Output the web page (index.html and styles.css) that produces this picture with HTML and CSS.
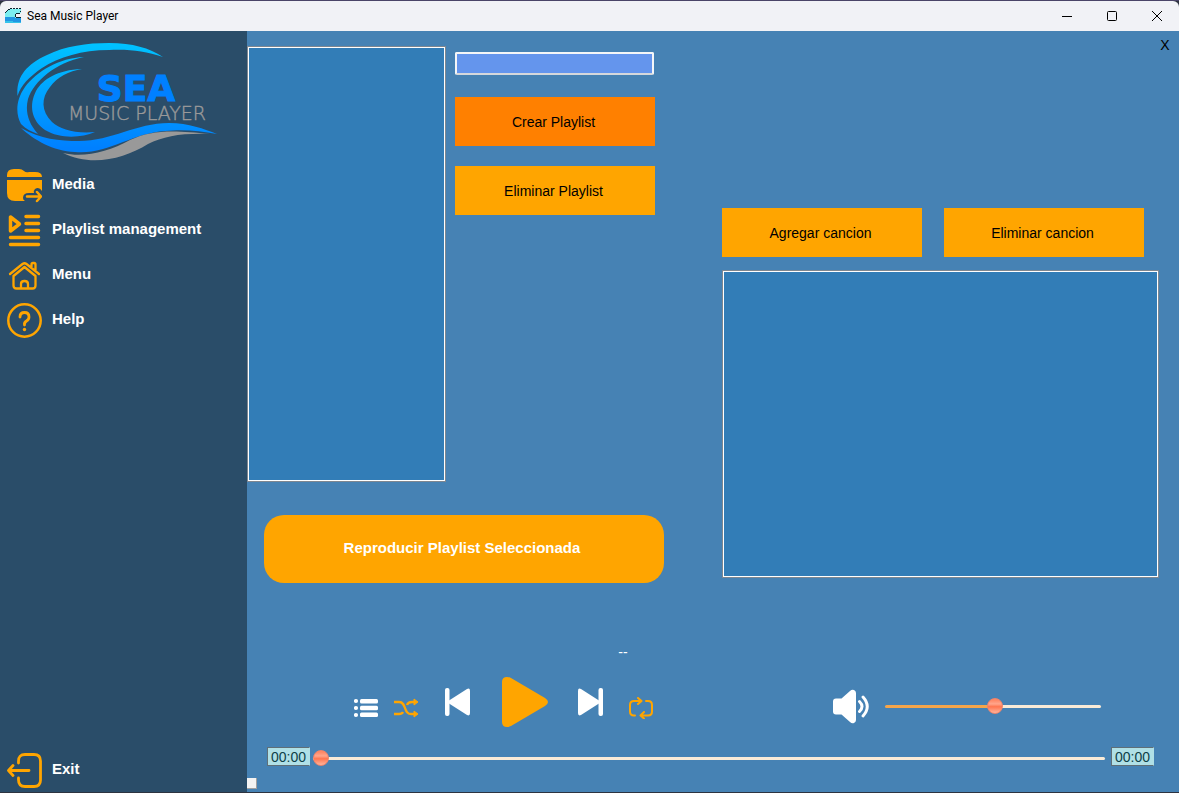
FILE: index.html
```html
<!DOCTYPE html>
<html lang="es">
<head>
<meta charset="utf-8">
<title>Sea Music Player</title>
<link rel="stylesheet" href="styles.css">
</head>
<body>
<div class="window">
  <header class="titlebar">
    <svg class="app-icon" viewBox="0 0 16 16" aria-hidden="true">
      <path fill="#7ceef0" d="M3 1h13v4h-5v1h-1v3h6v1H0V5h1V3h2z"/>
      <path fill="#2196e3" d="M0 9h10v1h6v5H0z"/>
      <path fill="#35c3ea" d="M0 13h8v1h8v1H0z"/>
      <path fill="#0b2430" d="M0 4h1v1H0zM1 3h1v1H1zM2 2h1v1H2zM3 1h2v1H3zM5 0h2v1H5zM8 0h2v1H8zM11 0h2v1h-2zM14 0h2v1h-2zM15 3h1v1h-1zM11 5h4v1h-4zM10 6h1v3h-1zM11 9h5v1h-5z"/>
    </svg>
    <span class="app-title">Sea Music Player</span>
    <div class="window-buttons">
      <button class="window-button" aria-label="Minimizar"><svg viewBox="0 0 12 12"><path d="M1 6.500h10"/></svg></button>
      <button class="window-button" aria-label="Maximizar"><svg viewBox="0 0 12 12"><rect x="1.500" y="1.500" width="9" height="9" rx="1"/></svg></button>
      <button class="window-button" aria-label="Cerrar"><svg viewBox="0 0 12 12"><path d="M1 1l10 10M11 1L1 11"/></svg></button>
    </div>
  </header>

  <div class="body">
    <aside class="sidebar">
      <svg class="logo" viewBox="0 0 200 118" role="img" aria-label="Sea Music Player">
        <defs>
          <linearGradient id="sea" gradientUnits="userSpaceOnUse" x1="0" y1="0" x2="0" y2="105">
            <stop offset="0" stop-color="#00c3ff"/><stop offset="1" stop-color="#0080ff"/>
          </linearGradient>
        </defs>
        <g fill="url(#sea)">
          <path d="M0.500 53C-1 35 8 22 30 12C48 3 70 0 92 0C116 0 132 5 146 14C128 8 112 6 92 7C65 7 42 14 25 25C12 34 4 42 0.500 53Z"/>
          <path d="M67 14C42 15 20 28 8 44C-2 58-1 72 4 81C9 86 15 89 21 91C11 80 8 68 11 56C17 38 38 20 67 14Z"/>
          <path d="M65 26C40 27 26 36 19 48C12 62 14 77 28 87C43 96 64 95 78 89C58 91 43 86 35 79C24 68 24 55 33 44C40 34 52 28 65 26Z"/>
          <path d="M4 85C24 96 42 98 62 98C95 98 119 80 152 80C172 80 187 86 200 91C182 88 168 86 148 88C115 90 90 112 58 109C36 108 17 97 4 85Z"/>
        </g>
        <path fill="#999" d="M46 110C67 115 91 109 113 97C135 87 155 87 193 91C166 90 147 93 131 101C107 116 74 124 46 110Z"/>
        <text class="logo-name" x="119" y="58">SEA</text>
        <text class="logo-subtitle" x="120" y="77">MUSIC PLAYER</text>
      </svg>

      <nav class="nav">
        <button class="nav-item">
          <svg class="nav-icon" viewBox="0 0 35 35"><path fill="#ffa500" d="M0 9V7Q0 1 7 1h5q3 0 5 2t5 1h6q7 0 7 5zM0 12h35v11q-3-5-7-2-2 2-1 4h-5q-6 0-6 5 0 2 2 3H8q-8 0-8-8z"/><path fill="none" stroke="#ffa500" stroke-width="2.500" stroke-linecap="round" stroke-linejoin="round" d="M20 28.500h13M30 24l4 4.500-4 4.500"/></svg>
          <span>Media</span>
        </button>
        <button class="nav-item">
          <svg class="nav-icon" viewBox="0 0 35 35"><g fill="none" stroke="#ffa500" stroke-width="3.500" stroke-linecap="round" stroke-linejoin="round"><path d="M19 3.500h12.500M19 10.500h12.500M19 17.500h12.500M3.500 24.500h28M3.500 31.500h28"/><path d="M3.500 4v14l9-7z"/></g></svg>
          <span>Playlist management</span>
        </button>
        <button class="nav-item">
          <svg class="nav-icon" viewBox="0 0 35 35"><g fill="none" stroke="#ffa500" stroke-width="2.300" stroke-linecap="round" stroke-linejoin="round"><path d="M3 16L15.500 6Q17.500 4.500 19.500 6L32 16M6.500 18v9.500q0 3 3 3h16q3 0 3-3V18M6.500 18L17.500 9 28.500 18M14 30.500V26q0-3 3.500-3t3.500 3v4.500M24.500 9V6.500q0-1.500 1.500-1.500h1q1.500 0 1.500 1.500V12"/></g></svg>
          <span>Menu</span>
        </button>
        <button class="nav-item">
          <svg class="nav-icon" viewBox="0 0 35 35"><g fill="none" stroke="#ffa500" stroke-linecap="round"><circle cx="17.500" cy="17.500" r="16.200" stroke-width="2.500"/><path stroke-width="2.800" d="M13 14q0-4.500 4.500-4.500T22 14q0 2.500-2.500 4t-2 4"/></g><circle cx="17.500" cy="26.500" r="1.700" fill="#ffa500"/></svg>
          <span>Help</span>
        </button>
        <button class="nav-item nav-exit">
          <svg class="nav-icon" viewBox="0 0 35 35"><path fill="none" stroke="#ffa500" stroke-width="2.800" stroke-linecap="round" stroke-linejoin="round" d="M11.500 10V8q0-6.500 6.500-6.500h9q6.500 0 6.500 6.500v19q0 6.500-6.500 6.500h-9q-6.500 0-6.500-6.500v-2M22 17.500H2M6 12.500L1.500 17.500 6 22.500"/></svg>
          <span>Exit</span>
        </button>
      </nav>
    </aside>

    <main class="main">
      <section class="workspace">
        <div class="playlists">
          <div class="playlist-row">
            <div class="list" role="listbox" aria-label="Playlists"></div>
            <div class="playlist-tools">
              <input class="name-input" type="text" aria-label="Nombre de la playlist">
              <button class="action action-create">Crear Playlist</button>
              <button class="action">Eliminar Playlist</button>
            </div>
          </div>
          <button class="play-selected">Reproducir Playlist Seleccionada</button>
        </div>
        <div class="songs">
          <button class="close-panel">X</button>
          <div class="song-tools">
            <button class="action">Agregar cancion</button>
            <button class="action">Eliminar cancion</button>
          </div>
          <div class="list" role="listbox" aria-label="Canciones"></div>
        </div>
      </section>

      <section class="player">
        <div class="now-playing">--</div>
        <div class="controls">
          <div class="mode-buttons">
            <button class="icon-button" aria-label="Lista"><svg width="24" height="20" viewBox="0 0 24 20" fill="#fff"><circle cx="2" cy="3" r="2.100"/><circle cx="2" cy="10" r="2.100"/><circle cx="2" cy="17" r="2.100"/><rect x="6" y="1" width="18" height="4.400" rx="1.500"/><rect x="6" y="7.800" width="18" height="4.400" rx="1.500"/><rect x="6" y="14.600" width="18" height="4.400" rx="1.500"/></svg></button>
            <button class="icon-button" aria-label="Aleatorio"><svg width="25" height="20" viewBox="0 0 25 20"><g fill="none" stroke="#ffa500" stroke-width="2.300"><path d="M0 4h5c8 0 4 12 12 12h4M0 16h5q3 0 4-2M13 7q1-3 5-3h3"/></g><path fill="#ffa500" stroke="#ffa500" stroke-linejoin="round" d="M20 1l4 3-4 3zM20 13l4 3-4 3z"/></svg></button>
          </div>
          <div class="transport">
            <button class="icon-button" aria-label="Anterior"><svg width="25" height="28" viewBox="0 0 25 28" fill="#fff"><rect width="4.500" height="28" rx="2"/><path d="M4 12.500L22 1q3-1.500 3 2v22q0 3.500-3 2L4 15.500z"/></svg></button>
            <button class="icon-button" aria-label="Reproducir"><svg width="48" height="50" viewBox="-2 0 48 50"><path fill="#ffa500" d="M0 5Q0 0 5 0q2 0 4 1l34 20q6 4 0 8L9 49q-2 1-4 1-5 0-5-5z"/></svg></button>
            <button class="icon-button" aria-label="Siguiente"><svg width="25" height="28" viewBox="0 0 25 28" fill="#fff"><rect x="20.500" width="4.500" height="28" rx="2"/><path d="M21 12.500L3 1Q0-.5 0 3v22q0 3.500 3 2l18-11.500z"/></svg></button>
          </div>
          <button class="icon-button repeat" aria-label="Repetir"><svg width="24" height="22" viewBox="0 0 24 22"><g fill="none" stroke="#ffa500" stroke-width="2" stroke-linecap="round" stroke-linejoin="round"><path d="M6 18.500H5q-4 0-4-4V8q0-4 4-4h7M9 1l3.500 3L9 7M17 4h2q4 0 4 4v6.500q0 4-4 4h-7M15 15l-3.500 3.500L15 21.500"/></g></svg></button>
          <div class="volume">
            <button class="icon-button" aria-label="Silenciar"><svg width="36" height="35" viewBox="0 0 36 35"><path fill="#fff" d="M3 9.500h5.500L17 2q2-2 4-1 2 1 2 3v27q0 2-2 3t-4-1l-8.500-7.500H3q-3 0-3-3v-10q0-3 3-3z"/><g fill="none" stroke="#fff" stroke-width="2.900" stroke-linecap="round"><path d="M26.500 12.500q5 5 0 10M30 8q8.500 9.500 0 19"/></g></svg></button>
            <input class="slider volume-slider" type="range" min="0" max="100" value="51" aria-label="Volumen">
          </div>
        </div>
        <div class="seek">
          <span class="time">00:00</span>
          <input class="slider seek-slider" type="range" min="0" max="100" value="0" aria-label="Progreso">
          <span class="time">00:00</span>
        </div>
        <div class="grip"></div>
      </section>
    </main>
  </div>
</div>
</body>
</html>
```

FILE: styles.css
```css
* { box-sizing: border-box; }

body {
  margin: 0;
  background: #2d3340;
  font-family: "Liberation Sans", Arial, sans-serif;
  font-size: 14px;
  color: #000;
}

button {
  margin: 0;
  padding: 0;
  border: 0;
  background: none;
  color: inherit;
  font: inherit;
}

svg { display: block; }

.window {
  display: flex;
  flex-direction: column;
  min-height: 100vh;
  border-top: 1px solid #4a4468;
  border-bottom: 1px solid #2d3340;
}

.titlebar {
  display: flex;
  align-items: center;
  height: 30px;
  padding-left: 5px;
  background: #f1f2f6;
  border-radius: 6px 6px 0 0;
}

.app-icon { width: 16px; height: 16px; }

.app-title {
  margin-left: 6px;
  font-family: Roboto, sans-serif;
  font-size: 12px;
}

.window-buttons { display: flex; margin-left: auto; }

.window-button {
  display: grid;
  place-items: center;
  width: 45px;
  height: 30px;
}

.window-button svg {
  width: 12px;
  height: 12px;
  fill: none;
  stroke: #000;
}

.body { display: flex; flex: 1; }

.sidebar {
  display: flex;
  flex-direction: column;
  flex: none;
  width: 247px;
  padding: 12px 0 1px;
  background: #2a4d69;
}

.logo { width: 200px; height: 118px; margin-left: 17px; }

.logo-name {
  fill: #0080ff;
  stroke: #0080ff;
  stroke-width: 1px;
  font-family: "DejaVu Sans", sans-serif;
  font-size: 36px;
  font-weight: 700;
  text-anchor: middle;
}

.logo-subtitle {
  fill: #999;
  stroke: #999;
  stroke-width: 0.4px;
  font-family: "DejaVu Sans", sans-serif;
  font-size: 19px;
  font-weight: 200;
  text-anchor: middle;
}

.nav { display: flex; flex-direction: column; flex: 1; }

.nav-item {
  display: flex;
  gap: 10px;
  height: 45px;
  padding: 7px 7px 0;
  color: #fff;
  font-size: 15px;
  font-weight: 700;
  line-height: 32px;
  text-align: left;
}

.nav-icon { width: 35px; height: 35px; }

.nav-exit { margin-top: auto; }

.main {
  display: flex;
  flex-direction: column;
  flex: 1;
  min-width: 0;
  background: #4682b4;
}

.workspace {
  display: grid;
  grid-template-columns: 475px 1fr;
  flex: 1;
}

.list {
  flex: 1;
  border: 1px solid #fff;
  outline: 1px solid #7f8790;
  background: #327db7;
}

.playlists {
  display: flex;
  flex-direction: column;
  padding: 16px 58px 0 1px;
  gap: 34px;
}

.playlist-row { display: flex; flex: 1; gap: 10px; padding-right: 9px; }

.playlist-tools {
  display: flex;
  flex-direction: column;
  width: 200px;
  padding-top: 5px;
}

.name-input {
  height: 23px;
  margin: 0 1px 22px 0;
  padding: 0 4px;
  border: 2px solid #f4f6f8;
  border-bottom-color: #d5d8dc;
  border-radius: 2px;
  background: #6495ed;
  font: inherit;
}

.action {
  width: 200px;
  height: 49px;
  margin-bottom: 20px;
  padding-right: 3px;
  background: #ffa500;
}

.action-create { background: #ff8000; }

.play-selected {
  height: 68px;
  margin-left: 16px;
  padding: 0 4px 3px 0;
  border-radius: 20px;
  background: #ffa500;
  color: #fff;
  font-size: 15px;
  font-weight: 700;
}

.songs {
  display: flex;
  flex-direction: column;
  padding: 0 21px 6px 0;
}

.close-panel {
  align-self: flex-end;
  width: 28px;
  height: 28px;
  margin-right: -21px;
  margin-bottom: 149px;
}

.song-tools {
  display: flex;
  gap: 22px;
  margin-bottom: 14px;
}

.song-tools .action { margin-bottom: 0; }

.songs .list { margin-left: 1px; }

.now-playing {
  margin-top: 60px;
  padding-right: 180px;
  color: #fff;
  line-height: 18px;
  text-align: center;
}

.controls {
  display: flex;
  align-items: center;
  height: 50px;
  margin-top: 16px;
  padding: 0 78px 0 107px;
}

.icon-button { flex: none; }

.mode-buttons { display: flex; gap: 16px; padding-top: 12px; }

.transport {
  display: flex;
  align-items: center;
  gap: 30px;
  margin: 0 26px;
}

.repeat { padding-top: 12px; }

.volume {
  display: flex;
  align-items: center;
  gap: 16px;
  margin-left: auto;
  padding-top: 8px;
}

.slider {
  height: 16px;
  margin: 0;
  appearance: none;
  background: none;
}

.slider::-webkit-slider-runnable-track {
  height: 3px;
  border-radius: 2px;
  background: #faebd7;
}

.slider::-webkit-slider-thumb {
  width: 16px;
  height: 16px;
  margin-top: -7px;
  appearance: none;
  border: 1px solid #f0846a;
  border-radius: 50%;
  background: linear-gradient(#ff8a68 10%, #ffa68c 35%, #ff7650 55%, #ffb49c);
}

.volume-slider { width: 216px; }

.volume-slider::-webkit-slider-runnable-track {
  background: linear-gradient(90deg, #f5a54a 51%, #faebd7 51%);
}

.seek {
  display: flex;
  align-items: center;
  margin-top: 20px;
  padding: 0 25px 0 20px;
}

.seek-slider { flex: 1; margin: 3px 6px 0 3px; }

.time {
  width: 43px;
  height: 19px;
  border: 1px solid #5f6f78;
  border-right-color: #b0e0e6;
  background: #b0e0e6;
  color: #0d3f48;
  line-height: 18px;
  text-align: center;
}

.grip {
  width: 10px;
  height: 11px;
  margin: 12px 0 3px;
  border-right: 1px solid #a0a0a0;
  border-bottom: 1px solid #a0a0a0;
  background: #f3f3f3;
}
```
